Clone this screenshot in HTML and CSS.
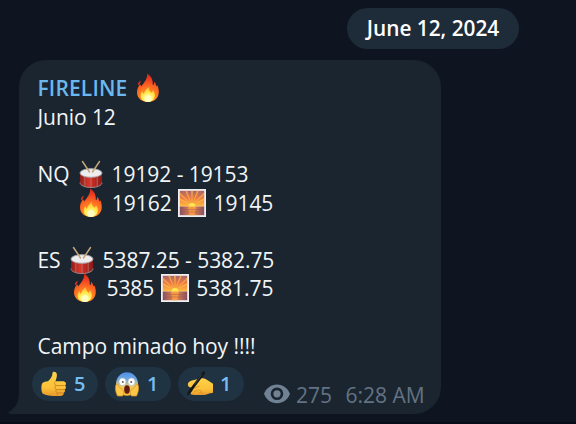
FILE: index.html
```
<!DOCTYPE html>
<html lang="en">
<head>
<meta charset="utf-8">
<title>Fireline</title>
<link rel="stylesheet" href="styles.css">
</head>
<body>
<svg class="defs" aria-hidden="true">
  <defs>
    <radialGradient id="flame" cx="14" cy="25" r="24" gradientUnits="userSpaceOnUse">
      <stop offset="0" stop-color="#ff9d20"/><stop offset=".4" stop-color="#ff7921"/><stop offset=".7" stop-color="#f44724"/><stop offset="1" stop-color="#d92318"/>
    </radialGradient>
    <radialGradient id="core" cx="14" cy="26" r="12" gradientUnits="userSpaceOnUse">
      <stop offset="0" stop-color="#fffed0"/><stop offset=".5" stop-color="#ffec50"/><stop offset="1" stop-color="#ffac30"/>
    </radialGradient>
    <linearGradient id="shell"><stop offset="0" stop-color="#8e1d19"/><stop offset=".4" stop-color="#d93529"/><stop offset="1" stop-color="#8b1a17"/></linearGradient>
    <linearGradient id="sky" x2="0" y2="1"><stop offset="0" stop-color="#a8666c"/><stop offset=".45" stop-color="#ed7944"/><stop offset="1" stop-color="#ffbd3e"/></linearGradient>
    <linearGradient id="sea"><stop offset="0" stop-color="#855064"/><stop offset=".5" stop-color="#ed8a46"/><stop offset="1" stop-color="#855064"/></linearGradient>
    <linearGradient id="skin" x2="0" y2="1"><stop offset="0" stop-color="#ffd24b"/><stop offset=".65" stop-color="#fbc138"/><stop offset="1" stop-color="#e99a2c"/></linearGradient>
    <linearGradient id="fear" x2="0" y2="1"><stop offset="0" stop-color="#4c8fe6"/><stop offset=".3" stop-color="#70a9e4"/><stop offset=".6" stop-color="#f1cc63"/><stop offset="1" stop-color="#f5b431"/></linearGradient>
    <symbol id="fire" viewBox="0 0 28 30">
      <path fill="url(#flame)" d="M13.200.5c3.200 2 5.300 5 5.500 8.400.1 1.400-.1 2.500.3 3.300.8-.3 1.200-2 1.200-3.500 1.500 1.300 1.900 3 2.300 4.600.5-.2.8-.6 1-1.100 1.300 3.300 1.800 7 .8 10.100-1.300 4.100-5 6.700-10.300 6.700-6.300 0-10.800-3.700-11-9.200-.1-3.600 1.200-6.300 3-8.800.5 1 .7 1.800 1.300 2.300 2.500-3.200 6.200-7 5.900-12.800z"/>
      <path fill="#e52f20" d="M6.700 7.500c-2 1.500-3.300 3-2.700 4.800.9-.3 2.600-1.700 2.700-4.800z"/>
      <path fill="url(#core)" d="M14.600 14c.1 2.500 1.200 4 3 5.700.7-.7 1.200-1.600 1.200-2.700 2.300 3 2.800 6 1.300 8.400-1.300 2.300-3.500 3.400-6 3.400-4.300 0-7.200-2.300-7.500-5.600-.1-2.200.8-3.900 1.900-5.200.2 1.200.7 2.300 1.500 2.900.1-2.700 2.300-4.500 4.600-6.900z"/>
      <ellipse cx="14" cy="25.500" rx="3.500" ry="3.600" fill="#fffec0"/>
    </symbol>
    <symbol id="drum" viewBox="0 0 28 30">
      <path fill="url(#shell)" d="M3 14v9.500c0 3 5 5 11 5s11-2 11-5V14z"/>
      <path fill="none" stroke="#b7a7a5" stroke-width=".5" d="M7.800 17v10M14 18v10M20.200 17v10"/>
      <path fill="none" stroke="#9e8588" stroke-width="1" d="M3 23.500c0 3 5 5 11 5s11-2 11-5"/>
      <ellipse cx="14" cy="14" rx="11" ry="4.300" fill="#eeeef0" stroke="#aaa4a8" stroke-width="1"/>
      <path stroke="#c3a579" stroke-width="1.500" stroke-linecap="round" d="M5.500 2.500l7 10.500M22.500 2.500l-7 10.500"/>
    </symbol>
    <symbol id="sunrise" viewBox="0 0 28 28">
      <path fill="#f1eef2" d="M0 0h28v28H0z"/>
      <path fill="url(#sky)" d="M1.800 1.800h24.400v15.700H1.800z"/>
      <path fill="#ffc24a" opacity=".65" d="M14 16L1.800 9v2.300zM14 16L1.800 3.500V5.800zM14 16L7 1.800h2zM14 16L13 1.800h2zM14 16L19 1.800h2zM14 16L26.200 3.500v2.300zM14 16L26.200 9v2.300z"/>
      <path fill="url(#sea)" d="M1.800 17.500h24.400v8.700H1.800z"/>
      <path fill="#f49a44" d="M10 17.500h8l-1.500 8.700h-5z"/>
      <path stroke="#a75853" stroke-width=".7" opacity=".7" d="M2 20.500h24M2 23h24"/>
      <path fill="#ffe74f" d="M10.500 17.600a3.500 3.600 0 0 1 7 0z"/>
    </symbol>
  </defs>
</svg>
<main class="chat">
  <div class="date">June 12, 2024</div>
  <article class="bubble">
    <svg class="tail" viewBox="0 0 12 22"><path d="M12 0H11C11 10 8 16 .5 20Q0 21 2 22H12z"/></svg>
    <div class="line"><span class="name">FIRELINE</span> <svg class="emoji"><use href="#fire"/></svg></div>
    <div class="line">Junio 12</div>
    <div class="line"></div>
    <div class="line">NQ <svg class="emoji"><use href="#drum"/></svg> 19192 - 19153</div>
    <div class="line">       <svg class="emoji"><use href="#fire"/></svg> 19162 <svg class="emoji sun"><use href="#sunrise"/></svg> 19145</div>
    <div class="line"></div>
    <div class="line">ES <svg class="emoji"><use href="#drum"/></svg> 5387.25 - 5382.75</div>
    <div class="line">      <svg class="emoji"><use href="#fire"/></svg> 5385 <svg class="emoji sun"><use href="#sunrise"/></svg> 5381.75</div>
    <div class="line"></div>
    <div class="line">Campo minado hoy !!!!</div>
    <footer class="footer">
      <div class="reaction">
        <svg class="face" viewBox="0 0 26 26"><path fill="url(#skin)" d="M1 12.500c1.500-1.500 4-2 6-2.200C9.500 8 11.500 5.500 11.500 2c.2-2 3.800-1.600 4.300 1 .4 2.400-.4 4.500-1.300 7.200h7c3.400 0 4.500 2.600 2.500 4.300 1.500 1.500 1.200 3-.4 4 .8 1.500.3 2.800-1 3.300.6 1.800-.7 3.200-3.600 3.200h-6.500C8 25 4 24 1.500 22.500 0 20 .1 15 1 12.500z"/><path fill="none" stroke="#c88121" stroke-width=".9" d="M14.500 10.500c-1.500 1.200-1.400 3.200.5 4h8.500M14.800 14.600c-1.300 1.600-.8 3.200.6 4h8M15.400 18.700c-1 1.600-.3 2.800.9 3.200h6M16.300 22c-.7 1.200 0 2 1 2.600"/></svg>
        <span>5</span>
      </div>
      <div class="reaction">
        <svg class="face" viewBox="0 0 26 26"><ellipse cx="13" cy="13" rx="11" ry="11.800" fill="url(#fear)"/><g fill="#fff" stroke="#9caaae" stroke-width=".6"><ellipse cx="8.500" cy="10.800" rx="3.600" ry="3.900"/><ellipse cx="17.500" cy="10.800" rx="3.600" ry="3.900"/></g><g fill="#675b50"><circle cx="8.800" cy="11" r="1"/><circle cx="17.200" cy="11" r="1"/></g><ellipse cx="13" cy="18.500" rx="2.800" ry="4.200" fill="#5e1b0e"/><path fill="#fdc847" stroke="#d99127" stroke-width=".7" d="M2 13.500c1.400-1 2.300.3 2.600 2l3.900 3c1.700 1.700 1.200 4 .2 6.500H3.500C1.500 21 .8 17 2 13.500zM24 13.500c-1.400-1-2.300.3-2.600 2l-3.900 3c-1.700 1.700-1.200 4-.2 6.500h5.200c2-4 2.700-8 1.500-11.500z"/></svg>
        <span>1</span>
      </div>
      <div class="reaction">
        <svg class="face" viewBox="0 0 26 26"><path fill="url(#skin)" d="M1 12.500C1.500 10.500 4 9.500 7 9l6-1.500c4-.9 6 .2 8 2l5 3.300c.5 3.200.3 6.500-.3 9.200-3.700 0-5.700 2-9.700 2H7c-3 0-4.500-1.500-3-3.500l3-3.200-3.500-.8C1.500 16 .5 14.500 1 12.500z"/><path fill="none" stroke="#d98d2a" stroke-width=".8" d="M6.500 17.500l6-2.500M7 20.500l4.500-1.500c2 0 3 1 2.500 2.300M11.500 23c1-1.500 3-1.500 4.500-.4"/><path stroke="#141719" stroke-width="2.800" stroke-linecap="round" d="M16.700 1.800L4.200 18.500"/><path fill="#141719" d="M3 17.500l2.600 2-2.600 3.300-3 2 .8-3.600z"/><path stroke="#5c6265" stroke-width=".6" d="M14.700 3.500L7.500 13.500"/></svg>
        <span>1</span>
      </div>
      <div class="meta">
        <svg class="eye" viewBox="0 0 26 20"><path fill-rule="evenodd" d="M13 .5C19 .5 24 4.500 26 9.800 24 15.500 19 19.300 13 19.300S2 15.500 0 9.800C2 4.500 7 .5 13 .5zm0 3a6.300 6.300 0 1 0 0 12.600 6.300 6.300 0 0 0 0-12.600z"/><circle cx="13" cy="9.800" r="3.600"/></svg>
        <span class="views">275</span>
        <time>6:28 AM</time>
      </div>
    </footer>
  </article>
</main>
</body>
</html>
```
FILE: styles.css
```
* { box-sizing: border-box; }
body {
  margin: 0;
  background: #0e1520;
  color: #f2f5f7;
  font: 21px/28.650px "Open Sans", "Noto Sans", sans-serif;
}
.defs { position: absolute; width: 0; height: 0; }
.chat {
  height: 424px;
  padding: 8px 0 0 19px;
  overflow: hidden;
  border-bottom: 2px solid #080e19;
}
.date {
  width: 172px;
  height: 41px;
  margin: 0 0 11px 328px;
  border-radius: 21px;
  background: #1e2b38;
  color: #fff;
  font-weight: 600;
  font-size: 20.800px;
  line-height: 41px;
  text-align: center;
}
.bubble {
  position: relative;
  width: 422px;
  height: 354px;
  padding: 14px 16px 0 18.500px;
  border-radius: 27px 27px 27px 0;
  background: #1a2530;
}
.tail {
  position: absolute;
  left: -11px;
  bottom: 0;
  width: 12px;
  height: 22px;
  fill: #1a2530;
}
.line { height: 28.650px; white-space: pre; letter-spacing: -0.060px; }
.name { color: #6ab8ee; font-weight: 600; font-size: 21px; letter-spacing: 0.150px; line-height: 1; }
.emoji {
  width: 28px;
  height: 30px;
  margin: -4px 1.600px;
  vertical-align: -3px;
}
.sun { height: 28px; margin: -4px 2.200px -4px 1px; vertical-align: -2px; }
.footer { display: flex; gap: 7px; margin: 7px 0 0 -5.500px; }
.reaction {
  display: flex;
  align-items: center;
  gap: 7px;
  width: 66px;
  height: 34px;
  padding-left: 9px;
  border-radius: 17px;
  background: #203342;
  color: #75bcf2;
  font-weight: 600;
  font-size: 20px;
}
.face { width: 26px; height: 26px; }
.meta {
  display: flex;
  align-items: center;
  height: 34px;
  margin: 11px 0 0 13px;
  color: #637383;
  white-space: nowrap;
}
.eye { width: 26px; height: 20px; margin: -3px 6px 0 0; fill: #718294; }
.views { margin-right: 13.500px; }
```
